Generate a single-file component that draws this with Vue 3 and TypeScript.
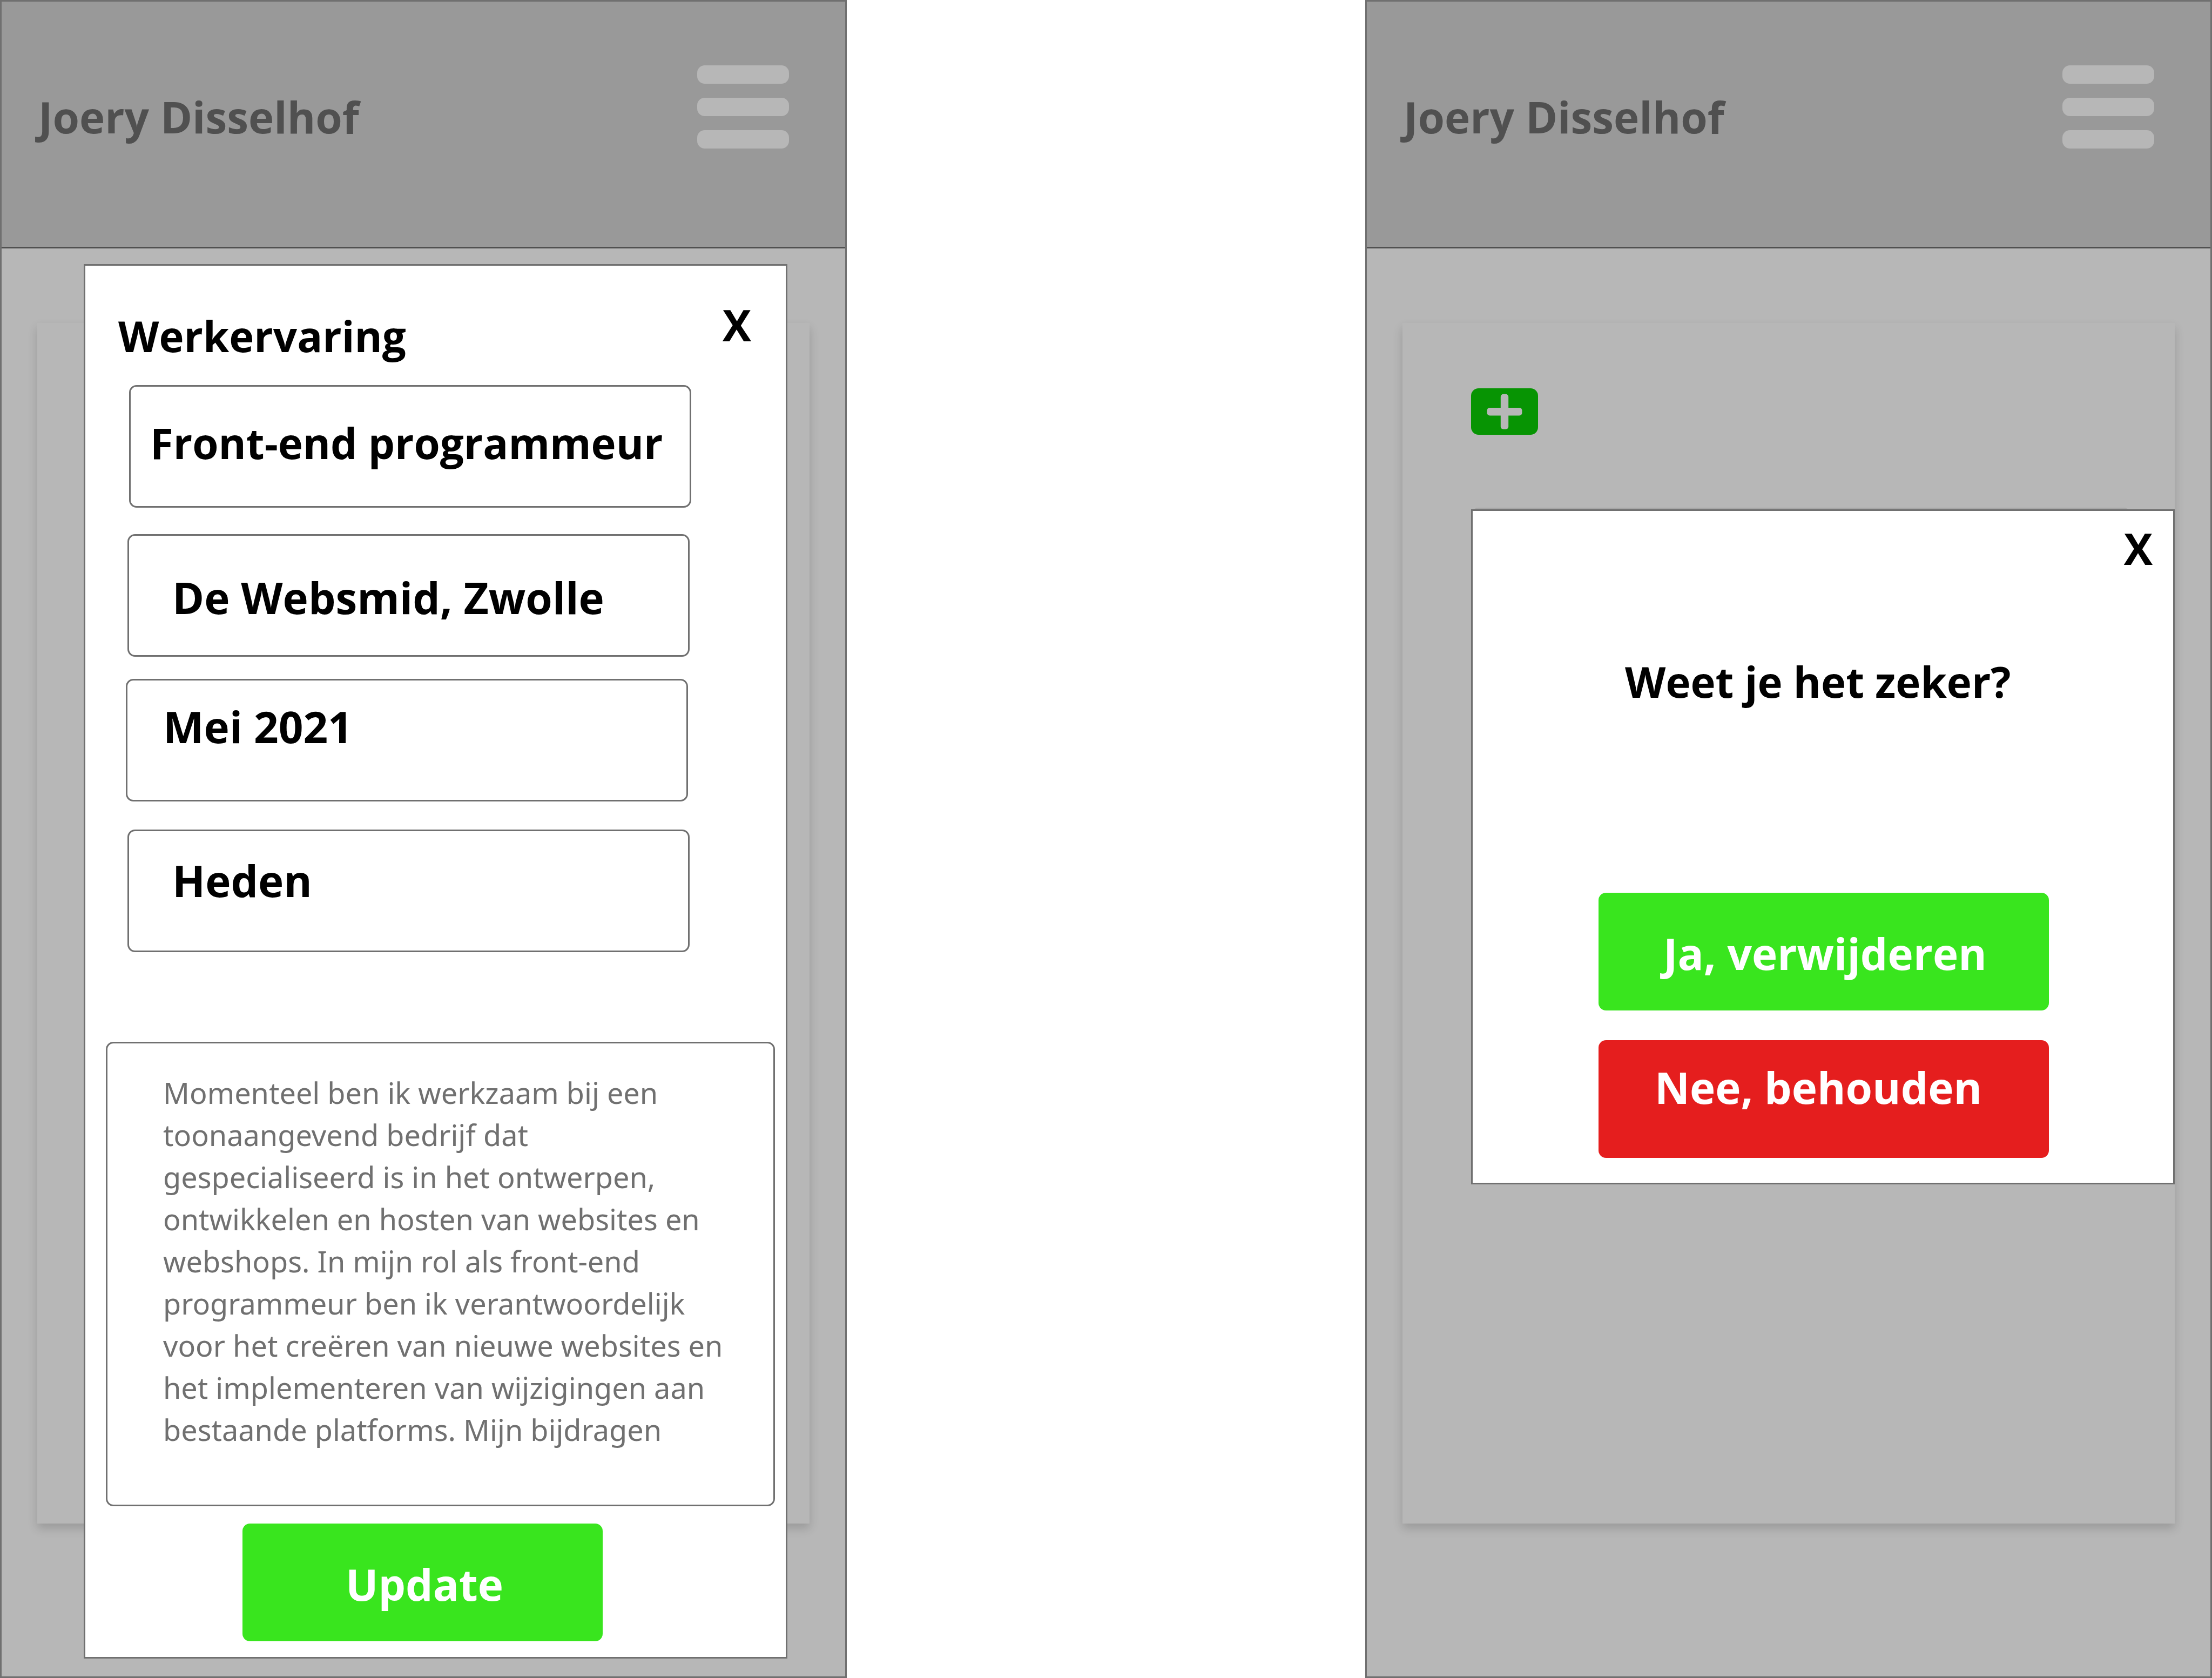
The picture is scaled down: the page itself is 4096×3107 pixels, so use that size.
<script setup lang="ts">
import { ref } from 'vue'

interface Field {
  id: string
  label: string
  value: string
}

const owner = 'Joery Disselhof'

const fields = ref<Field[]>([
  { id: 'functie', label: 'Functie', value: 'Front-end programmeur' },
  { id: 'bedrijf', label: 'Bedrijf', value: 'De Websmid, Zwolle' },
  { id: 'begin', label: 'Begindatum', value: 'Mei 2021' },
  { id: 'eind', label: 'Einddatum', value: 'Heden' },
])

const description = ref(
  [
    'Momenteel ben ik werkzaam bij een',
    'toonaangevend bedrijf dat',
    'gespecialiseerd is in het ontwerpen,',
    'ontwikkelen en hosten van websites en',
    'webshops. In mijn rol als front-end',
    'programmeur ben ik verantwoordelijk',
    'voor het creëren van nieuwe websites en',
    'het implementeren van wijzigingen aan',
    'bestaande platforms. Mijn bijdragen',
  ].join('\n'),
)
</script>

<template>
  <main class="boards">
    <section class="board">
      <header class="topbar">
        <h1 class="owner">{{ owner }}</h1>
        <button class="menu" type="button" aria-label="Menu">
          <span></span><span></span><span></span>
        </button>
      </header>
      <div class="card"></div>

      <form class="modal modal-edit" @submit.prevent>
        <div class="modal-head">
          <h2 class="modal-title">Werkervaring</h2>
          <button class="close" type="button" aria-label="Sluiten">X</button>
        </div>
        <input
          v-for="field in fields"
          :id="field.id"
          :key="field.id"
          v-model="field.value"
          class="field"
          :class="field.id"
          type="text"
          :aria-label="field.label"
        />
        <textarea v-model="description" class="description" aria-label="Omschrijving"></textarea>
        <button class="action update" type="submit">Update</button>
      </form>
    </section>

    <section class="board">
      <header class="topbar">
        <h1 class="owner">{{ owner }}</h1>
        <button class="menu" type="button" aria-label="Menu">
          <span></span><span></span><span></span>
        </button>
      </header>
      <div class="card">
        <button class="add" type="button" aria-label="Toevoegen">
          <svg viewBox="0 0 172 120" aria-hidden="true">
            <rect x="76" y="15" width="20" height="90" rx="7" />
            <rect x="41" y="50" width="90" height="20" rx="7" />
          </svg>
        </button>
        <div class="entry"></div>
      </div>

      <div class="modal modal-confirm" role="dialog" aria-labelledby="question">
        <button class="close" type="button" aria-label="Sluiten">X</button>
        <h2 id="question" class="question">Weet je het zeker?</h2>
        <button class="action confirm" type="button">Ja, verwijderen</button>
        <button class="action keep" type="button">Nee, behouden</button>
      </div>
    </section>
  </main>
</template>

<style>
body {
  margin: 0;
  background: #fff;
}
</style>

<style scoped>
* {
  box-sizing: border-box;
}

.boards {
  display: flex;
  gap: 960px;
  min-height: 100vh;
  font-family: 'Open Sans', 'Noto Sans', sans-serif;
  color: #000;
}

h1,
h2,
button,
input,
textarea {
  margin: 0;
  padding: 0;
  border: 0;
  background: none;
  font: inherit;
  color: inherit;
}

h1,
h2,
.close,
.field,
.action {
  font-size: 80px;
  font-weight: 700;
  line-height: 112px;
  white-space: nowrap;
}

.modal-title,
.question,
.functie {
  font-size: 78px;
}

.board {
  position: relative;
  flex: 1;
  min-width: 0;
  display: flex;
  flex-direction: column;
  border: 3px solid #707070;
  background: #b7b7b7;
}

.topbar {
  display: flex;
  align-items: flex-start;
  justify-content: space-between;
  height: 457px;
  padding: 118px 104px 0 68px;
  border-bottom: 3px solid #505050;
  background: #999;
}

.owner {
  margin-top: 39px;
  color: #505050;
}

.menu {
  display: flex;
  flex-direction: column;
  gap: 26px;
  width: 170px;
}

.menu span {
  height: 34px;
  border-radius: 14px;
  background: #b7b7b7;
}

.card {
  height: 2223px;
  margin: 138px 66px 0;
  padding: 121px 127px 0;
  background: #b7b7b7;
  box-shadow: 0 9px 17px rgba(0, 0, 0, 0.16);
}

.add {
  display: block;
  width: 124px;
  height: 86px;
  border-radius: 14px;
  background: #079403;
}

.add svg {
  display: block;
  width: 100%;
  fill: #b7b7b7;
}

.entry {
  width: 1222px;
  height: 227px;
  margin-top: 135px;
  border-radius: 14px;
  background: #a6a6a6;
}

.modal {
  position: absolute;
  display: flex;
  flex-direction: column;
  border: 3px solid #707070;
  background: #fff;
}

.modal-edit {
  top: 486px;
  left: 152px;
  right: 107px;
  padding: 53px 0 29px;
}

.modal-head {
  display: flex;
  align-items: flex-start;
  justify-content: space-between;
  padding: 0 64px 0 61px;
}

.modal-title {
  margin-top: 21px;
}

.field {
  width: 1041px;
  height: 227px;
  border: 3px solid #707070;
  border-radius: 14px;
}

.functie {
  margin: 35px 0 0 81px;
  padding: 48px 0 61px 36px;
}

.bedrijf {
  margin: 49px 0 0 78px;
  padding: 57px 0 52px 80px;
}

.begin {
  margin: 41px 0 0 75px;
  padding: 28px 0 81px 66px;
}

.eind {
  margin: 52px 0 0 78px;
  padding: 34px 0 75px 80px;
}

.description {
  height: 860px;
  margin: 166px 20px 0 38px;
  padding: 52px 0 0 103px;
  border: 3px solid #707070;
  border-radius: 14px;
  overflow: hidden;
  resize: none;
  white-space: pre;
  font-family: 'Noto Sans', 'Open Sans', sans-serif;
  font-size: 54px;
  line-height: 78px;
  color: #707070;
}

.action {
  height: 218px;
  border-radius: 14px;
  color: #fff;
}

.update {
  width: 667px;
  margin: 32px 0 0 291px;
  padding: 6px 0 0 7px;
  background: #39e51e;
}

.modal-confirm {
  top: 940px;
  left: 193px;
  right: 66px;
  padding: 13px 0 46px;
}

.modal-confirm .close {
  align-self: flex-end;
  margin-right: 38px;
}

.question {
  margin: 135px 0 0 282px;
}

.confirm,
.keep {
  width: 834px;
  margin-left: 233px;
}

.confirm {
  margin-top: 335px;
  padding: 6px 0 0 5px;
  background: #39e51e;
}

.keep {
  margin-top: 55px;
  padding: 0 20px 44px 0;
  background: #e51e1e;
}
</style>
